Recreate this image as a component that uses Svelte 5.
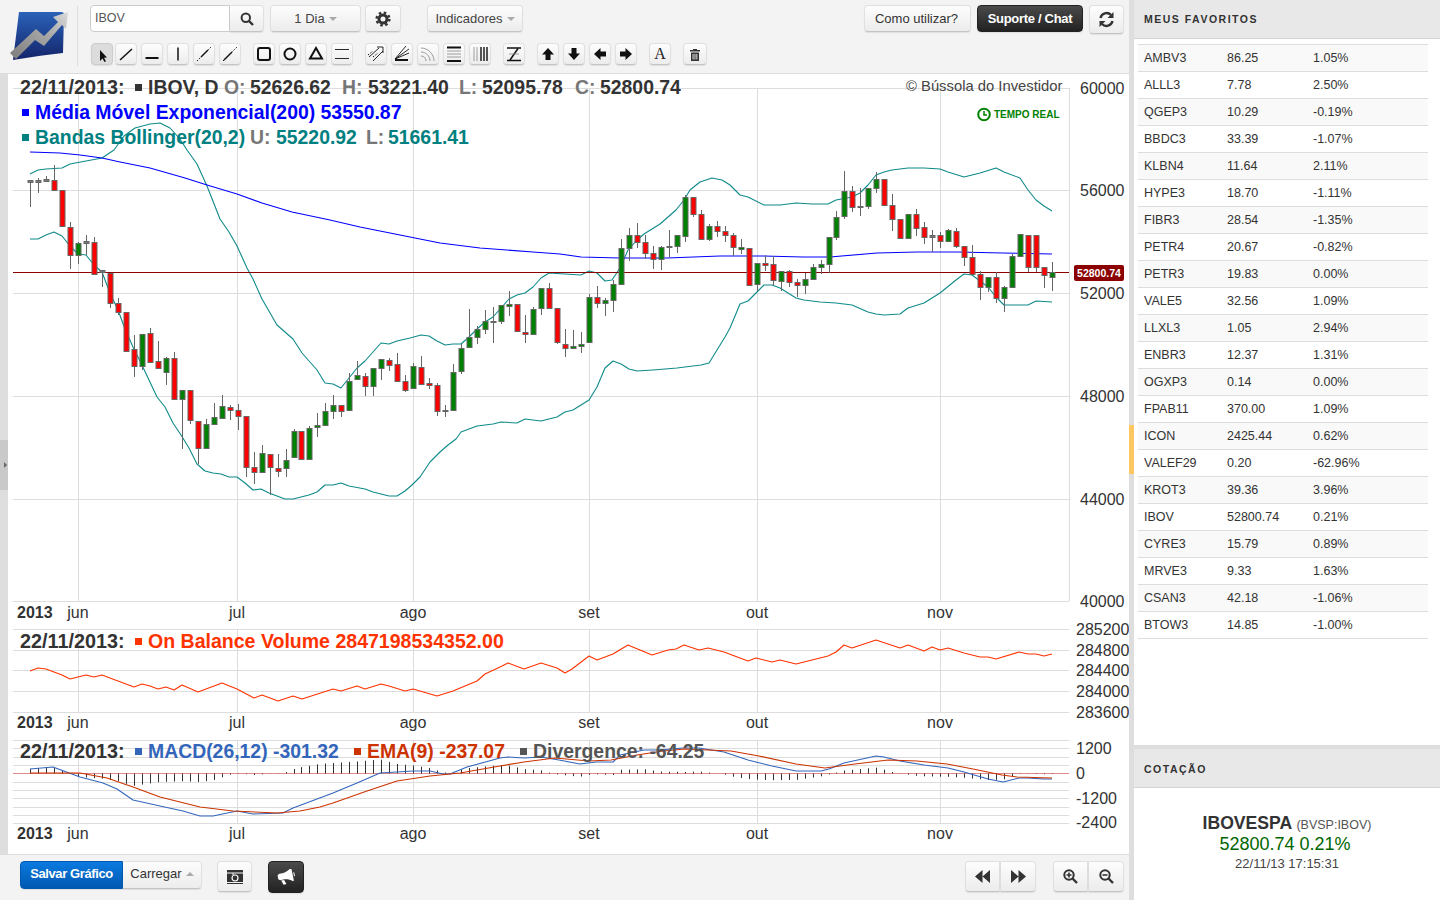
<script>
  // hi, body top, body bottom, lo (screen y) and colour; one candle every 8px
  const candles = [
    [180,180,182,207,'d'],[178,180,182,193,'d'],[176,179,181,181,'d'],[165,180,190,190,'r'],[190,190,226,226,'r'],[222,227,255,269,'r'],
    [242,243,255,264,'g'],[235,241,243,255,'d'],[237,242,274,274,'r'],[270,270,272,287,'d'],[273,273,303,308,'r'],[298,303,312,315,'r'],
    [312,312,351,352,'r'],[335,349,366,377,'r'],[334,334,366,370,'g'],[328,333,362,362,'r'],[341,361,368,368,'r'],[357,358,372,385,'g'],
    [352,358,399,399,'r'],[390,390,399,449,'g'],[390,390,420,424,'r'],[421,421,448,464,'r'],[419,424,448,448,'g'],[403,417,424,424,'g'],
    [395,406,418,418,'g'],[405,407,410,420,'r'],[404,410,416,430,'r'],[416,416,467,477,'r'],[452,467,472,484,'r'],[445,453,472,472,'g'],
    [454,454,467,495,'r'],[454,468,471,477,'r'],[449,460,468,477,'g'],[429,431,457,457,'g'],[431,431,459,459,'r'],[426,428,459,459,'g'],
    [413,425,427,437,'g'],[403,411,425,425,'g'],[395,405,411,419,'g'],[405,405,411,417,'r'],[373,381,410,410,'g'],[361,375,379,379,'g'],
    [373,376,386,396,'r'],[368,368,386,396,'g'],[359,359,368,380,'g'],[358,360,365,371,'r'],[353,364,381,381,'r'],[375,381,390,392,'r'],
    [363,366,388,388,'g'],[356,367,384,384,'r'],[378,383,385,389,'r'],[383,385,411,416,'r'],[405,410,411,417,'g'],[364,372,410,410,'g'],
    [344,348,371,374,'g'],[309,337,347,347,'g'],[326,329,337,344,'g'],[310,321,329,334,'g'],[307,321,322,343,'d'],[305,305,321,324,'g'],
    [291,304,306,316,'g'],[304,304,331,331,'r'],[315,332,334,343,'r'],[307,309,334,334,'g'],[288,288,308,315,'g'],[283,288,308,308,'r'],
    [308,308,342,344,'r'],[329,344,348,357,'r'],[330,346,348,348,'g'],[332,344,346,353,'g'],[294,297,342,342,'g'],[286,297,303,308,'r'],
    [298,300,303,316,'g'],[280,284,300,312,'g'],[239,248,284,284,'g'],[228,235,248,261,'g'],[223,235,242,248,'r'],[235,242,253,259,'r'],
    [246,253,259,269,'r'],[246,247,259,270,'g'],[230,246,247,257,'d'],[235,235,246,253,'g'],[195,197,236,242,'g'],[197,197,214,217,'r'],
    [210,214,239,240,'r'],[224,226,239,241,'g'],[221,226,231,237,'r'],[226,231,235,242,'r'],[233,235,247,256,'r'],[239,247,249,254,'g'],
    [248,248,285,285,'r'],[263,263,284,291,'g'],[255,263,265,271,'r'],[256,264,280,285,'r'],[271,271,281,291,'g'],[270,271,282,287,'r'],
    [279,282,285,297,'r'],[273,279,285,294,'g'],[264,267,279,279,'g'],[260,264,267,274,'g'],[237,237,264,273,'g'],[211,217,237,240,'g'],
    [171,191,216,219,'g'],[186,191,207,212,'r'],[188,206,207,216,'d'],[188,188,206,209,'g'],[172,179,188,193,'g'],[179,179,205,205,'r'],
    [194,205,219,231,'r'],[219,219,238,238,'r'],[214,214,238,239,'g'],[209,214,228,236,'r'],[222,227,237,244,'r'],[230,235,237,252,'d'],
    [232,235,241,248,'r'],[229,230,241,241,'g'],[228,231,246,248,'r'],[246,246,257,266,'r'],[245,257,274,275,'r'],[271,274,287,300,'r'],
    [277,277,287,292,'g'],[272,277,298,303,'r'],[286,287,298,312,'g'],[254,256,287,287,'g'],[234,234,256,256,'g'],[235,235,267,272,'r'],
    [235,235,267,272,'r'],[267,267,275,288,'r'],[262,272,277,291,'g']
  ].map((c, i) => ({ x: Math.round(30 + i * 7.985) + 0.5, hi: c[0], top: c[1], bot: c[2], lo: c[3], kind: c[4] }));

  const upper = [[30,174],[38,170],[46,169],[62,168],[70,164],[86,161],[102,158],[114,150],[124,136],[135,128],[150,124],[160,123],[170,128],[180,139],[187,150],[197,164],[207,186],[220,219],[229,232],[237,246],[247,268],[253,279],[262,299],[277,325],[293,339],[302,353],[317,370],[325,383],[333,384],[341,388],[349,378],[357,368],[365,361],[373,352],[381,343],[389,344],[397,341],[410,338],[421,335],[429,336],[437,341],[445,345],[453,344],[461,344],[469,337],[477,329],[485,322],[493,317],[501,308],[509,299],[517,295],[525,293],[533,287],[541,278],[549,273],[565,274],[581,275],[589,271],[597,273],[605,281],[612,280],[620,268],[628,250],[636,241],[644,234],[652,229],[660,224],[668,217],[676,210],[684,200],[690,190],[700,182],[712,178],[722,180],[730,185],[740,195],[748,197],[764,205],[780,205],[796,203],[812,204],[828,204],[836,200],[852,197],[860,193],[868,185],[876,175],[884,172],[892,170],[908,168],[924,168],[940,169],[948,172],[964,177],[980,173],[996,168],[1004,172],[1020,178],[1028,190],[1036,200],[1044,206],[1052,211]];
  const lower = [[30,239],[38,239],[46,235],[54,232],[62,236],[70,246],[78,254],[86,255],[94,265],[102,272],[110,293],[118,310],[125,329],[133,347],[141,363],[149,380],[157,397],[165,407],[173,423],[181,435],[189,448],[197,464],[205,471],[213,473],[221,474],[229,477],[237,477],[245,483],[253,490],[261,489],[269,493],[277,496],[285,499],[293,499],[301,497],[309,495],[317,492],[325,485],[333,485],[341,483],[349,486],[365,489],[373,492],[381,494],[389,496],[397,496],[405,491],[412,485],[420,477],[430,462],[440,452],[448,445],[456,439],[461,432],[469,429],[477,426],[493,424],[501,422],[517,423],[525,419],[541,421],[557,417],[565,412],[573,410],[581,405],[589,400],[597,387],[605,368],[613,361],[621,364],[629,369],[637,371],[653,370],[677,368],[701,365],[709,363],[717,350],[725,337],[730,328],[740,304],[748,301],[756,293],[764,285],[772,285],[780,288],[788,293],[796,298],[804,300],[820,302],[836,303],[852,305],[868,312],[876,314],[884,315],[900,314],[908,308],[924,303],[940,293],[956,280],[964,274],[972,275],[980,281],[988,287],[996,297],[1004,305],[1028,305],[1036,301],[1052,302]];
  const ema200 = [[30,152],[60,153],[80,155],[102,158],[120,162],[150,168],[185,178],[207,185],[237,194],[262,203],[292,212],[330,220],[360,227],[400,235],[440,243],[480,248],[533,252],[560,254],[581,257],[620,258],[667,258],[720,256],[763,256],[803,257],[830,257],[877,253],[917,252],[957,252],[1003,253],[1052,254]];
  const obv = [[30,671],[38,668],[46,669],[54,672],[62,675],[70,679],[78,677],[86,675],[94,677],[102,675],[110,678],[118,681],[126,684],[134,687],[142,684],[150,686],[158,689],[166,687],[174,690],[182,685],[198,692],[222,683],[237,689],[254,698],[262,695],[278,701],[293,696],[302,699],[333,689],[341,691],[357,686],[365,689],[381,684],[389,686],[405,691],[413,689],[437,696],[453,691],[477,681],[485,674],[500,667],[508,663],[524,669],[541,663],[557,668],[565,673],[572,669],[589,656],[597,660],[613,654],[628,645],[652,655],[668,650],[676,649],[684,645],[699,650],[708,648],[724,652],[748,661],[756,658],[772,662],[780,660],[796,664],[812,660],[828,656],[836,652],[844,645],[852,648],[876,640],[900,648],[908,645],[924,651],[932,647],[940,650],[948,648],[964,653],[980,657],[988,657],[996,659],[1019,652],[1028,654],[1036,654],[1044,656],[1052,654]];
  const macd = [[30,769],[53,767],[80,777],[103,783],[117,789],[133,800],[160,806],[183,811],[200,816],[213,816],[237,811],[253,814],[283,813],[293,808],[333,793],[357,783],[380,773],[413,771],[430,771],[443,774],[450,774],[467,767],[500,758],[508,757],[524,758],[541,757],[559,760],[580,764],[596,762],[613,762],[620,755],[644,750],[659,750],[683,748],[699,748],[724,752],[748,760],[772,766],[796,771],[821,771],[829,769],[844,763],[876,756],[884,757],[900,761],[924,765],[948,768],[964,772],[988,779],[1003,782],[1019,778],[1028,778],[1043,779],[1052,779]];
  const signal = [[30,773],[80,773],[107,778],[133,787],[160,797],[200,807],[233,811],[277,813],[300,811],[320,807],[333,803],[350,797],[367,791],[397,781],[430,776],[460,773],[500,766],[524,762],[555,758],[589,761],[611,760],[637,755],[663,751],[685,749],[731,751],[759,756],[796,764],[825,768],[855,764],[888,760],[917,761],[947,764],[973,769],[1002,775],[1017,777],[1052,778]];

  const pts = (list) => list.map((p) => p.join(',')).join(' ');

  function valueAt(list, x) {
    for (let i = 1; i < list.length; i++) {
      if (x <= list[i][0]) {
        const [x0, y0] = list[i - 1];
        const [x1, y1] = list[i];
        return y0 + ((y1 - y0) * (x - x0)) / (x1 - x0);
      }
    }
    return list[list.length - 1][1];
  }

  const divergence = candles.map((c) => ({ x: c.x, y: 773 + valueAt(macd, c.x) - valueAt(signal, c.x) }));

  const months = [
    { label: 'jun', x: 78 },
    { label: 'jul', x: 237 },
    { label: 'ago', x: 413 },
    { label: 'set', x: 589 },
    { label: 'out', x: 757 },
    { label: 'nov', x: 940 }
  ];
  const priceAxis = [
    { label: '60000', y: 88 },
    { label: '56000', y: 190 },
    { label: '52000', y: 293 },
    { label: '48000', y: 396 },
    { label: '44000', y: 499 },
    { label: '40000', y: 601 }
  ];
  const obvAxis = [
    { label: '285200', y: 629 },
    { label: '284800', y: 650 },
    { label: '284400', y: 670 },
    { label: '284000', y: 691 },
    { label: '283600', y: 712 }
  ];
  const macdAxis = [
    { label: '1200', y: 748 },
    { label: '0', y: 773 },
    { label: '-1200', y: 798 },
    { label: '-2400', y: 822 }
  ];
  const macdGrid = [740, 748, 757, 765, 782, 790, 798, 807, 815, 823];

  // each group of drawing tools; a part is [path, class]
  const toolGroups = [
    [
      { active: true, parts: [['M9 7v11l2.500-2.500 2 3.500 1.500-.8-2-3.500 3-.3z', 'f']] },
      { parts: [['M5 17 17 6', 's']] },
      { parts: [['M4.500 15h13', 'b']] },
      { parts: [['M11 4.500v13', 's']] },
      { parts: [['M4 18l14-14', 'dot'], ['M8 14l7-7', 's']] },
      { parts: [['M4 18l14-14', 'dot'], ['M5 17l8-8', 's']] }
    ],
    [
      { parts: [['M7 5h8a2 2 0 0 1 2 2v8a2 2 0 0 1-2 2H7a2 2 0 0 1-2-2V7a2 2 0 0 1 2-2z', 'b']] },
      { parts: [['M16.500 11a5.500 5.500 0 1 1-11 0 5.500 5.500 0 1 1 11 0z', 'b']] },
      { parts: [['M11 5l6 10.500H5z', 'b']] },
      { parts: [['M4 6.500h14M4 15.500h14', 't']] }
    ],
    [
      { parts: [['M4 14 14 5M8 18 18 8', 't'], ['M12 4h6v6', 't'], ['M3 12l5-4M8 14l5-4', 'dot']] },
      { parts: [['M4 16 18 6M4 16 18 10', 't'], ['M4 17h13', 'b'], ['M4 16 15 3', 't']] },
      { parts: [['M4 5c7 0 13 6 13 13M4 9c5 0 9 4 9 9M4 13c3 0 5 2 5 5', 'g']] },
      { parts: [['M4 4.500h14M4 18h14', 'b'], ['M4 8h14M4 11h14M4 14h14', 'g']] },
      { parts: [['M5 4v14M8 4v14', 'g'], ['M12 4v14M15 4v14M18 4v14', 'b2']] }
    ],
    [{ parts: [['M4 5h14M4 17.500h14', 's'], ['M15 5.500 7 17', 's'], ['M6 11h10', 'g']] }],
    [
      { parts: [['M11 5l6 6.500h-3.500V17h-5v-5.500H5z', 'f']] },
      { parts: [['M11 17l6-6.500h-3.500V5h-5v5.500H5z', 'f']] },
      { parts: [['M5 11l6.500-6v3.500H17v5h-5.500V17z', 'f']] },
      { parts: [['M17 11l-6.500-6v3.500H5v5h5.500V17z', 'f']] }
    ]
  ];

  const favorites = [
    ['AMBV3', '86.25', '1.05%'], ['ALLL3', '7.78', '2.50%'], ['QGEP3', '10.29', '-0.19%'], ['BBDC3', '33.39', '-1.07%'],
    ['KLBN4', '11.64', '2.11%'], ['HYPE3', '18.70', '-1.11%'], ['FIBR3', '28.54', '-1.35%'], ['PETR4', '20.67', '-0.82%'],
    ['PETR3', '19.83', '0.00%'], ['VALE5', '32.56', '1.09%'], ['LLXL3', '1.05', '2.94%'], ['ENBR3', '12.37', '1.31%'],
    ['OGXP3', '0.14', '0.00%'], ['FPAB11', '370.00', '1.09%'], ['ICON', '2425.44', '0.62%'], ['VALEF29', '0.20', '-62.96%'],
    ['KROT3', '39.36', '3.96%'], ['IBOV', '52800.74', '0.21%'], ['CYRE3', '15.79', '0.89%'], ['MRVE3', '9.33', '1.63%'],
    ['CSAN3', '42.18', '-1.06%'], ['BTOW3', '14.85', '-1.00%']
  ];
</script>

<div class="page">
  <div class="main">
    <header class="toolbar">
      <div class="logo">
        <svg width="60" height="56" viewBox="8 8 60 56" aria-label="Logo">
          <defs>
            <linearGradient id="logoBlue" x1="0" y1="0" x2="0" y2="1">
              <stop offset="0" stop-color="#2a62b8" />
              <stop offset="1" stop-color="#14246a" />
            </linearGradient>
            <linearGradient id="logoArrow" x1="0" y1="1" x2="1" y2="0">
              <stop offset="0" stop-color="#7d7d7d" />
              <stop offset="0.6" stop-color="#a8a8a8" />
              <stop offset="1" stop-color="#dcdcdc" />
            </linearGradient>
          </defs>
          <path d="M19 12h42q3 0 3 2l-1 39q-20 2-50 7z" fill="url(#logoBlue)" />
          <path d="M10 53 36 29l8 7 14-14-5-5 15-5-2 17-4-4-18 21-9-6-19 19z" fill="url(#logoArrow)" />
        </svg>
      </div>
      <div class="controls">
        <div class="row">
          <div class="search">
            <input value="IBOV" aria-label="Ativo" />
            <button class="btn search-btn" aria-label="Buscar">
              <svg width="14" height="14" viewBox="0 0 14 14"><circle cx="5.800" cy="5.800" r="4.200" class="ring" /><path d="M9 9l4 4" class="handle" /></svg>
            </button>
          </div>
          <button class="btn period">1 Dia <span class="caret"></span></button>
          <button class="btn gear" aria-label="Configurar">
            <svg width="16" height="16" viewBox="0 0 16 16">
              <circle cx="8" cy="8" r="4" fill="none" stroke="#333" stroke-width="3" />
              <circle cx="8" cy="8" r="6.400" fill="none" stroke="#333" stroke-width="2.400" stroke-dasharray="2.510 2.510" />
            </svg>
          </button>
          <button class="btn indicators">Indicadores <span class="caret"></span></button>
          <div class="row-right">
            <button class="btn help">Como utilizar?</button>
            <button class="btn dark support">Suporte / Chat</button>
            <button class="btn refresh" aria-label="Atualizar">
              <svg width="17" height="17" viewBox="0 0 17 17">
                <path d="M2.500 7A6.200 6.200 0 0 1 13 4" fill="none" stroke="#333" stroke-width="2.400" />
                <path d="M15.500 1v6h-6z" fill="#333" />
                <path d="M14.500 10A6.200 6.200 0 0 1 4 13" fill="none" stroke="#333" stroke-width="2.400" />
                <path d="M1.500 16v-6h6z" fill="#333" />
              </svg>
            </button>
          </div>
        </div>
        <div class="row tools">
          {#each toolGroups as group}
            <div class="tool-group">
              {#each group as tool}
                <button class="btn tool" class:active={tool.active} aria-label="Ferramenta">
                  <svg width="22" height="22" viewBox="0 0 22 22">
                    {#each tool.parts as part}
                      <path d={part[0]} class={part[1]} />
                    {/each}
                  </svg>
                </button>
              {/each}
            </div>
          {/each}
          <button class="btn tool text-tool">A</button>
          <button class="btn tool trash" aria-label="Apagar">
            <svg width="12" height="13" viewBox="0 0 12 13">
              <path d="M4 1h4v1h3v1.500H1V2h3z" />
              <path d="M2 4.500h8V13H2zM3.600 6v5.500h.9V6zM5.500 6v5.500h.9V6zM7.400 6v5.500h.9V6z" fill-rule="evenodd" />
            </svg>
          </button>
        </div>
      </div>
    </header>

    <div class="chart-area">
      <div class="strip"><span class="strip-handle"></span></div>
      <svg class="chart" viewBox="8 74 1121 780" width="1121" height="780">
        <!-- price pane -->
        {#each priceAxis as t}
          <line x1="13" x2="1069" y1={t.y + 0.5} y2={t.y + 0.5} class="grid" />
        {/each}
        {#each months as m}
          <line x1={m.x + 0.5} x2={m.x + 0.5} y1="88" y2="601" class="grid" />
          <line x1={m.x + 0.5} x2={m.x + 0.5} y1="629" y2="712" class="grid" />
          <line x1={m.x + 0.5} x2={m.x + 0.5} y1="740" y2="823" class="grid" />
        {/each}
        <line x1="1069.500" x2="1069.500" y1="88" y2="601" class="grid" />

        <polyline points={pts(upper)} class="band" />
        <polyline points={pts(lower)} class="band" />
        <polyline points={pts(ema200)} class="ema" />
        <line x1="13" x2="1069" y1="272.500" y2="272.500" class="last-price" />

        {#each candles as c}
          <line x1={c.x} x2={c.x} y1={c.hi} y2={c.lo} class="wick" />
          <rect x={c.x - 2.5} y={c.top + 0.5} width="5" height={c.bot - c.top} class="body {c.kind}" />
        {/each}

        <text x="20" y="94" class="legend date dark-text">22/11/2013:</text>
        <rect x="135" y="84" width="7" height="7" fill="#333" />
        <text x="148" y="94" class="legend dark-text">IBOV, D</text>
        <text x="224" y="94" class="legend gray-text">O:</text>
        <text x="250" y="94" class="legend dark-text">52626.62</text>
        <text x="342" y="94" class="legend gray-text">H:</text>
        <text x="368" y="94" class="legend dark-text">53221.40</text>
        <text x="459" y="94" class="legend gray-text">L:</text>
        <text x="482" y="94" class="legend dark-text">52095.78</text>
        <text x="575" y="94" class="legend gray-text">C:</text>
        <text x="600" y="94" class="legend dark-text">52800.74</text>

        <rect x="22" y="109" width="7" height="7" fill="#0000ff" />
        <text x="35" y="119" class="legend" fill="#0000ff">Média Móvel Exponencial(200) 53550.87</text>
        <rect x="22" y="134" width="7" height="7" fill="#008080" />
        <text x="35" y="144" class="legend" fill="#008080">Bandas Bollinger(20,2)</text>
        <text x="250" y="144" class="legend gray-text">U:</text>
        <text x="276" y="144" class="legend" fill="#008080">55220.92</text>
        <text x="366" y="144" class="legend gray-text">L:</text>
        <text x="388" y="144" class="legend" fill="#008080">51661.41</text>

        <text x="906" y="91" class="credit">© Bússola do Investidor</text>
        <circle cx="984" cy="114.500" r="5.800" fill="none" stroke="#008000" stroke-width="2" />
        <path d="M984 111v4h3" fill="none" stroke="#008000" stroke-width="1.500" />
        <text x="994" y="118" class="realtime">TEMPO REAL</text>

        <rect x="1074" y="265" width="50" height="16" rx="2" fill="#8b0000" />
        <text x="1099" y="277" class="tag">52800.74</text>

        {#each priceAxis as t}
          <text x="1080" y={t.y + 6} class="axis">{t.label}</text>
        {/each}

        <!-- on balance volume pane -->
        {#each obvAxis as t}
          <line x1="13" x2="1069" y1={t.y + 0.5} y2={t.y + 0.5} class="grid" />
          <text x="1076" y={t.y + 6} class="axis">{t.label}</text>
        {/each}
        <polyline points={pts(obv)} class="obv" />
        <text x="20" y="648" class="legend date dark-text">22/11/2013:</text>
        <rect x="135" y="638" width="7" height="7" fill="#ff3300" />
        <text x="148" y="648" class="legend obv-value" fill="#ff3300">On Balance Volume 2847198534352.00</text>

        <!-- macd pane -->
        {#each macdGrid as y}
          <line x1="13" x2="1069" y1={y + 0.5} y2={y + 0.5} class="grid" />
        {/each}
        <line x1="13" x2="1069" y1="773.500" y2="773.500" class="zero" />
        {#each divergence as d}
          <line x1={d.x} x2={d.x} y1="773.500" y2={d.y} class="hist" />
        {/each}
        <polyline points={pts(macd)} class="macd" />
        <polyline points={pts(signal)} class="signal" />
        {#each macdAxis as t}
          <text x="1076" y={t.y + 6} class="axis">{t.label}</text>
        {/each}
        <text x="20" y="758" class="legend date dark-text">22/11/2013:</text>
        <rect x="135" y="748" width="7" height="7" fill="#3366bb" />
        <text x="148" y="758" class="legend" fill="#3366bb">MACD(26,12) -301.32</text>
        <rect x="354" y="748" width="7" height="7" fill="#cc3300" />
        <text x="367" y="758" class="legend" fill="#cc3300">EMA(9) -237.07</text>
        <rect x="520" y="748" width="7" height="7" fill="#555" />
        <text x="533" y="758" class="legend" fill="#555">Divergence: -64.25</text>

        <!-- time axes -->
        {#each [618, 728, 839] as y}
          <text x="17" {y} class="axis year">2013</text>
          {#each months as m}
            <text x={m.x} {y} class="axis month">{m.label}</text>
          {/each}
        {/each}
      </svg>
    </div>

    <footer class="bottom">
      <div class="joined">
        <button class="btn save">Salvar Gráfico</button>
        <button class="btn load">Carregar <span class="caret up"></span></button>
      </div>
      <button class="btn snapshot" aria-label="Foto">
        <svg width="16" height="14" viewBox="0 0 16 14">
          <path d="M0 0h16v2.500H0zM0 3.500h16V12H0z" fill="#333" />
          <path d="M0 13h16v1H0z" fill="#333" />
          <circle cx="8" cy="8" r="3" fill="none" stroke="#fff" stroke-width="1.200" />
          <path d="M5 3.500h2v1H5z" fill="#fff" />
        </svg>
      </button>
      <button class="btn dark announce" aria-label="Anunciar">
        <svg width="18" height="16" viewBox="0 0 18 16">
          <g transform="rotate(-12 9 8)">
            <path d="M16 1v12l-1 .5C12 11 9 10 6 10H2.500L1 8.500V5l1.500-1.500H6c3 0 6-1 9-3z" fill="#fff" />
            <path d="M3.500 10.500h3l1.500 4.500H5z" fill="#fff" />
            <path d="M17 5h1v4h-1z" fill="#fff" />
          </g>
        </svg>
      </button>
      <div class="bottom-right">
        <div class="joined">
          <button class="btn nav" aria-label="Voltar">
            <svg width="16" height="13" viewBox="0 0 16 13"><path d="M7.500 0v13L0 6.500zM15 0v13L7.500 6.500z" fill="#333" /></svg>
          </button>
          <button class="btn nav" aria-label="Avançar">
            <svg width="16" height="13" viewBox="0 0 16 13"><path d="M1 0v13l7.500-6.500zM8.500 0v13L16 6.500z" fill="#333" /></svg>
          </button>
        </div>
        <div class="joined">
          <button class="btn nav" aria-label="Aproximar">
            <svg width="15" height="15" viewBox="0 0 15 15"><circle cx="6" cy="6" r="4.700" class="ring" /><path d="M9.500 9.500l4.500 4.500" class="handle" /><path d="M3.500 6h5M6 3.500v5" class="mark" /></svg>
          </button>
          <button class="btn nav" aria-label="Afastar">
            <svg width="15" height="15" viewBox="0 0 15 15"><circle cx="6" cy="6" r="4.700" class="ring" /><path d="M9.500 9.500l4.500 4.500" class="handle" /><path d="M3.500 6h5" class="mark" /></svg>
          </button>
        </div>
      </div>
    </footer>
  </div>

  <div class="gutter"><span class="gutter-mark"></span></div>

  <aside class="side">
    <h2 class="side-title">MEUS FAVORITOS</h2>
    <div class="favorites">
      {#each favorites as row}
        <div class="fav-row">
          <span>{row[0]}</span>
          <span>{row[1]}</span>
          <span>{row[2]}</span>
        </div>
      {/each}
    </div>
    <div class="side-band"></div>
    <h2 class="side-title quote-title">COTAÇÃO</h2>
    <div class="quote">
      <div class="quote-name">IBOVESPA <small>(BVSP:IBOV)</small></div>
      <div class="quote-price">52800.74 0.21%</div>
      <div class="quote-time">22/11/13 17:15:31</div>
    </div>
  </aside>
</div>

<style>
  :global(body) {
    margin: 0;
    font-family: 'Liberation Sans', Arial, sans-serif;
    color: #333;
    background: #fff;
  }
  .page {
    display: flex;
    width: 1440px;
    height: 900px;
    overflow: hidden;
  }
  .main {
    width: 1129px;
    display: flex;
    flex-direction: column;
  }
  .toolbar {
    height: 73px;
    display: flex;
    background: #f3f3f3;
    border-bottom: 1px solid #ddd;
  }
  .logo {
    width: 78px;
    height: 60px;
    margin-top: 6px;
    border-right: 1px solid #ddd;
    box-sizing: border-box;
    padding: 2px 0 0 8px;
  }
  .logo svg {
    display: block;
  }
  .controls {
    flex: 1;
    padding: 5px 5px 0 12px;
    min-width: 0;
  }
  .row {
    display: flex;
    align-items: flex-start;
  }
  .btn {
    box-sizing: border-box;
    display: flex;
    align-items: center;
    justify-content: center;
    padding: 0;
    font: 13px 'Liberation Sans', Arial, sans-serif;
    color: #444;
    background: linear-gradient(#fdfdfd, #ececec);
    border: 1px solid #e0e0e0;
    border-bottom-color: #c4c4c4;
    border-radius: 4px;
    box-shadow: 0 1px 1px rgba(0, 0, 0, 0.08);
  }
  .dark {
    background: linear-gradient(#4a4a4a, #222);
    border-color: #222;
    color: #fff;
    font-weight: 700;
  }
  .search {
    display: flex;
  }
  .search input {
    box-sizing: border-box;
    width: 140px;
    height: 27px;
    padding: 0 4px 2px;
    font: 12.500px 'Liberation Sans', Arial, sans-serif;
    color: #555;
    background: #fff;
    border: 1px solid #ccc;
    border-radius: 4px 0 0 4px;
    outline: none;
  }
  .search-btn {
    width: 34px;
    height: 27px;
    border-radius: 0 4px 4px 0;
    border-left: 0;
  }
  .ring {
    fill: none;
    stroke: #333;
    stroke-width: 2;
  }
  .handle {
    fill: none;
    stroke: #333;
    stroke-width: 2.400;
  }
  .mark {
    fill: none;
    stroke: #333;
    stroke-width: 1.600;
  }
  .caret {
    width: 0;
    height: 0;
    margin-left: 4px;
    border: 4px solid transparent;
    border-top-color: #aaa;
    border-bottom-width: 0;
  }
  .caret.up {
    border-top-width: 0;
    border-bottom: 4px solid #aaa;
  }
  .period {
    width: 91px;
    height: 27px;
    margin-left: 6px;
  }
  .gear {
    width: 36px;
    height: 27px;
    margin-left: 4px;
  }
  .indicators {
    width: 96px;
    height: 27px;
    margin-left: 26px;
  }
  .row-right {
    margin-left: auto;
    display: flex;
    align-items: flex-start;
    gap: 6px;
  }
  .help {
    width: 107px;
    height: 27px;
    padding-right: 2px;
    color: #333;
  }
  .support {
    width: 106px;
    height: 27px;
    letter-spacing: -0.300px;
  }
  .refresh {
    width: 35px;
    height: 29px;
  }
  .tools {
    margin-top: 9px;
    margin-left: 1px;
    gap: 12px;
  }
  .tool-group {
    display: flex;
    gap: 4px;
  }
  .tool {
    width: 22px;
    height: 22px;
  }
  .tool svg {
    display: block;
    flex: none;
    margin: -1px;
  }
  .active {
    margin-right: -2px;
    background: #dcdcdc;
    border-color: #ccc;
  }
  .text-tool {
    font: 16px 'Liberation Serif', 'Times New Roman', serif;
    color: #222;
  }
  .tool path {
    fill: none;
    stroke: #111;
  }
  .tool path.f {
    fill: #111;
    stroke: none;
  }
  .tool path.s {
    stroke-width: 1.500;
  }
  .tool path.b {
    stroke-width: 2;
  }
  .tool path.b2 {
    stroke-width: 1.400;
  }
  .tool path.t {
    stroke-width: 0.900;
  }
  .tool path.g {
    stroke: #888;
    stroke-width: 0.800;
  }
  .tool path.dot {
    stroke-width: 1;
    stroke-dasharray: 1.500 1.500;
  }
  .tool.trash {
    width: 24px;
  }
  .tool.trash svg {
    margin: 0;
  }
  .tool.trash path {
    fill: #333;
    stroke: none;
  }

  .chart-area {
    display: flex;
    height: 780px;
    background: #fff;
  }
  .strip {
    width: 8px;
    flex: none;
    background: #dedede;
    padding-top: 366px;
  }
  .strip-handle {
    display: block;
    position: relative;
    height: 50px;
    background: #c9c9c9;
  }
  .strip-handle::after {
    content: '';
    position: absolute;
    left: 4px;
    top: 22px;
    border: 3px solid transparent;
    border-left-color: #666;
    border-right-width: 0;
  }
  .chart {
    display: block;
    font-family: 'Liberation Sans', Arial, sans-serif;
  }
  .grid {
    stroke: #ddd;
    stroke-width: 1;
  }
  .band,
  .ema,
  .obv,
  .macd,
  .signal {
    fill: none;
    stroke-width: 1.100;
    stroke-linejoin: round;
  }
  .band {
    stroke: #0f8a8a;
  }
  .ema {
    stroke: #0000ff;
  }
  .obv {
    stroke: #ff3300;
  }
  .macd {
    stroke: #3366bb;
  }
  .signal {
    stroke: #cc3300;
  }
  .last-price {
    stroke: #8b0000;
    stroke-width: 1;
  }
  .zero {
    stroke: #e08a8a;
    stroke-width: 1;
  }
  .hist {
    stroke: #333;
    stroke-width: 1;
  }
  .wick {
    stroke: #666;
    stroke-width: 1;
  }
  .body {
    stroke: #666;
    stroke-width: 1;
  }
  .body.r {
    fill: #ff0000;
  }
  .body.g {
    fill: #008000;
  }
  .body.d {
    fill: #777;
  }
  .legend {
    font-size: 19.400px;
    font-weight: 700;
  }
  .legend.date {
    font-size: 19.800px;
  }
  .legend.obv-value {
    font-size: 19.550px;
  }
  .dark-text {
    fill: #333;
  }
  .gray-text {
    fill: #777;
  }
  .credit {
    font-size: 14.800px;
    fill: #444;
  }
  .realtime {
    font-size: 10px;
    font-weight: 700;
    fill: #008000;
  }
  .tag {
    font-size: 10.500px;
    font-weight: 700;
    fill: #fff;
    text-anchor: middle;
  }
  .axis {
    font-size: 16px;
    fill: #333;
  }
  .year {
    font-weight: 700;
  }
  .month {
    text-anchor: middle;
  }

  .bottom {
    height: 46px;
    box-sizing: border-box;
    display: flex;
    align-items: flex-start;
    padding: 6px 5px 0 20px;
    background: #f3f3f3;
    border-top: 1px solid #ddd;
  }
  .joined {
    display: flex;
  }
  .joined .btn:first-child {
    border-radius: 4px 0 0 4px;
  }
  .joined .btn:last-child {
    border-radius: 0 4px 4px 0;
    border-left: 0;
  }
  .save {
    width: 103px;
    height: 28px;
    padding-bottom: 3px;
    color: #fff;
    font-weight: 700;
    letter-spacing: -0.400px;
    background: linear-gradient(#0a7ae0, #0058b0);
    border-color: #0058b0;
  }
  .load {
    width: 79px;
    height: 28px;
    padding-bottom: 3px;
    color: #333;
  }
  .snapshot {
    width: 35px;
    height: 31px;
    margin-left: 15px;
  }
  .announce {
    width: 36px;
    height: 32px;
    margin-left: 16px;
  }
  .bottom-right {
    margin-left: auto;
    display: flex;
    gap: 17px;
  }
  .nav {
    width: 35px;
    height: 31px;
  }
  .joined .nav:last-child {
    width: 36px;
    border-left: 1px solid #ddd;
  }

  .gutter {
    width: 5px;
    flex: none;
    background: #dedede;
    padding-top: 425px;
    box-sizing: border-box;
  }
  .gutter-mark {
    display: block;
    height: 49px;
    background: #ffc75f;
  }
  .side {
    width: 306px;
    display: flex;
    flex-direction: column;
    background: #fff;
  }
  .side-title {
    margin: 0;
    box-sizing: border-box;
    height: 39px;
    padding: 0 0 0 10px;
    display: flex;
    align-items: center;
    font-size: 10.500px;
    font-weight: 700;
    letter-spacing: 1.500px;
    color: #333;
    background: #e8e8e8;
    border-bottom: 1px solid #d4d4d4;
  }
  .favorites {
    flex: 1;
    margin: 5px 12px 0 4px;
    border-top: 1px solid #ddd;
    align-self: stretch;
  }
  .fav-row {
    display: grid;
    grid-template-columns: 83px 86px 1fr;
    align-items: center;
    box-sizing: border-box;
    height: 27px;
    padding-left: 6px;
    font-size: 12.500px;
    color: #333;
    border-bottom: 1px solid #ddd;
  }
  .fav-row:nth-child(odd) {
    background: #f9f9f9;
  }
  .side-band {
    height: 4px;
    background: #dedede;
  }
  .quote-title {
    padding-top: 1px;
  }
  .quote {
    height: 112px;
    box-sizing: border-box;
    padding: 27px 0 0;
    text-align: center;
  }
  .quote-name {
    font-size: 17.600px;
    font-weight: 700;
    line-height: 17px;
    color: #333;
  }
  .quote-name small {
    font-size: 12.500px;
    font-weight: 400;
    color: #555;
  }
  .quote-price {
    font-size: 18px;
    line-height: 20px;
    padding-right: 4px;
    color: #006600;
  }
  .quote-time {
    font-size: 13px;
    line-height: 20px;
    color: #444;
  }
</style>
